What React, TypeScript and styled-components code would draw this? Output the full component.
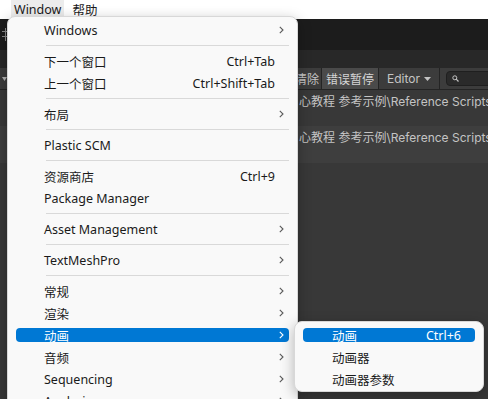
import React from 'react';
import styled, { createGlobalStyle } from 'styled-components';

const Global = createGlobalStyle`
  html, body { margin: 0; padding: 0; background: #383838; }
  body { width: 488px; height: 399px; overflow: hidden; }
  #root { width: 488px; height: 399px; }
`;

const Screen = styled.div`
  position: relative;
  width: 488px;
  height: 399px;
  overflow: hidden;
  display: flex;
  flex-direction: column;
  background: #383838;
`;

/* ---------- top menu bar ---------- */
const MenuBar = styled.div`
  flex: 0 0 16px;
  background: #ffffff;
  display: flex;
  align-items: stretch;
  padding-left: 11px;
  gap: 5px;
  font-family: "Noto Sans", "Noto Sans CJK SC", sans-serif;
  font-size: 12.5px;
  color: #1a1a1a;
`;

const MenuBarItem = styled.div<{ $open?: boolean }>`
  display: flex;
  align-items: center;
  padding: 0 3px;
  background: ${(p) => (p.$open ? '#ececec' : 'transparent')};
`;

/* ---------- dark editor behind ---------- */
const Editor = styled.div`
  flex: 1;
  display: flex;
  flex-direction: column;
  font-family: Inter, "Noto Sans CJK SC", sans-serif;
  font-size: 12px;
  color: #c4c4c4;
`;

const TabStrip = styled.div`
  flex: 0 0 31px;
  background: #1c1c1c;
  display: flex;
  align-items: center;
  padding-left: 2px;
`;

const TabHeader = styled.div`
  flex: 0 0 18px;
  background: #282828;
`;

const Toolbar = styled.div`
  flex: 0 0 21px;
  background: #3c3c3c;
  border-bottom: 1px solid #242424;
  display: flex;
  align-items: stretch;
`;

const DropArrow = styled.div`
  width: 10px;
  display: flex;
  align-items: center;
  padding-left: 2px;
`;

const Spacer = styled.div`
  flex: 1;
`;

const ToolButton = styled.div<{ $w: number; $on?: boolean; $end?: boolean }>`
  flex: 0 0 ${(p) => p.$w}px;
  box-sizing: border-box;
  display: flex;
  align-items: center;
  justify-content: ${(p) => (p.$end ? 'flex-end' : 'center')};
  padding-right: ${(p) => (p.$end ? '2px' : '0')};
  gap: 4px;
  border-right: 1px solid #242424;
  background: ${(p) => (p.$on ? '#4a4a4a' : 'transparent')};
  color: ${(p) => (p.$on ? '#d4d4d4' : '#c4c4c4')};
  white-space: nowrap;
`;

const Search = styled.div`
  flex: 0 0 52px;
  margin: 3px -10px 3px 6px;
  box-sizing: border-box;
  border-radius: 4px;
  background: #2a2a2a;
  border: 1px solid #1f1f1f;
  display: flex;
  align-items: center;
  padding-left: 5px;
`;

const LogRow = styled.div<{ $alt?: boolean; $h: number }>`
  flex: 0 0 ${(p) => p.$h}px;
  box-sizing: border-box;
  background: ${(p) => (p.$alt ? '#3e3e3e' : '#383838')};
  padding: 5px 0 0 299px;
  line-height: 14px;
  white-space: nowrap;
  overflow: hidden;
`;

const Filler = styled.div`
  flex: 1;
  background: #383838;
`;

/* ---------- drop-down menus ---------- */
const Menu = styled.div<{ $left: number; $top: number; $width: number }>`
  position: absolute;
  left: ${(p) => p.$left}px;
  top: ${(p) => p.$top}px;
  width: ${(p) => p.$width}px;
  box-sizing: border-box;
  padding: 2px 0 1px;
  background: #f9f9f9;
  border: 1px solid #d8d8d8;
  border-radius: 8px;
  box-shadow: 0 4px 14px rgba(0, 0, 0, 0.28);
  font-family: "Noto Sans", "Noto Sans CJK SC", sans-serif;
  font-size: 12.5px;
  color: #1a1a1a;
`;

const Item = styled.div<{ $active?: boolean; $indent: number }>`
  position: relative;
  height: 22px;
  margin: 0 8px;
  padding-left: ${(p) => p.$indent}px;
  display: grid;
  grid-template-columns: 1fr auto 14px;
  align-items: center;
  white-space: nowrap;
  color: ${(p) => (p.$active ? '#ffffff' : 'inherit')};
  &::before {
    content: '';
    position: absolute;
    left: 0;
    right: 0;
    top: 4px;
    bottom: 4px;
    border-radius: 4px;
    background: ${(p) => (p.$active ? '#0078d4' : 'transparent')};
  }
  & > * {
    position: relative;
  }
`;

const Shortcut = styled.span`
  text-align: right;
`;

const Arrow = styled.span`
  display: flex;
  align-items: center;
  padding-left: 4px;
`;

const Separator = styled.div`
  height: 9px;
  margin: 0 8px 0 38px;
  display: flex;
  align-items: center;
  &::after {
    content: '';
    flex: 1;
    height: 1px;
    background: #d9d9d9;
  }
`;

type Entry =
  | { sep: true }
  | { label: string; shortcut?: string; sub?: boolean; active?: boolean };

const windowMenu: Entry[] = [
  { label: 'Windows', sub: true },
  { sep: true },
  { label: '下一个窗口', shortcut: 'Ctrl+Tab' },
  { label: '上一个窗口', shortcut: 'Ctrl+Shift+Tab' },
  { sep: true },
  { label: '布局', sub: true },
  { sep: true },
  { label: 'Plastic SCM' },
  { sep: true },
  { label: '资源商店', shortcut: 'Ctrl+9' },
  { label: 'Package Manager' },
  { sep: true },
  { label: 'Asset Management', sub: true },
  { sep: true },
  { label: 'TextMeshPro', sub: true },
  { sep: true },
  { label: '常规', sub: true },
  { label: '渲染', sub: true },
  { label: '动画', sub: true, active: true },
  { label: '音频', sub: true },
  { label: 'Sequencing', sub: true },
  { label: 'Analysis', sub: true },
];

const animMenu: Entry[] = [
  { label: '动画', shortcut: 'Ctrl+6', active: true },
  { label: '动画器' },
  { label: '动画器参数' },
];

const Chevron = ({ color }: { color: string }) => (
  <svg width="5" height="8" viewBox="0 0 5 8">
    <polyline points="0.8,0.8 4,4 0.8,7.2" fill="none" stroke={color} strokeWidth="1.1" />
  </svg>
);

const MenuList = ({ entries, indent }: { entries: Entry[]; indent: number }) => (
  <>
    {entries.map((e, i) =>
      'sep' in e ? (
        <Separator key={i} />
      ) : (
        <Item key={i} $active={e.active} $indent={indent}>
          <span>{e.label}</span>
          <Shortcut>{e.shortcut ?? ''}</Shortcut>
          <Arrow>{e.sub ? <Chevron color={e.active ? '#ffffff' : '#5a5a5a'} /> : null}</Arrow>
        </Item>
      )
    )}
  </>
);

export default function App() {
  return (
    <Screen>
      <Global />
      <MenuBar>
        <MenuBarItem $open>Window</MenuBarItem>
        <MenuBarItem>帮助</MenuBarItem>
      </MenuBar>
      <Editor>
        <TabStrip>
          <svg width="6" height="13" viewBox="0 0 6 13">
            <g stroke="#8a8a8a" strokeWidth="1" fill="none">
              <line x1="3.5" y1="0" x2="3.5" y2="13" />
              <line x1="0" y1="3.5" x2="6" y2="3.5" />
              <line x1="0" y1="8.5" x2="6" y2="8.5" />
            </g>
          </svg>
        </TabStrip>
        <TabHeader />
        <Toolbar>
          <DropArrow>
            <svg width="5" height="4" viewBox="0 0 5 4">
              <polygon points="0,0 5,0 2.5,4" fill="#b4b4b4" />
            </svg>
          </DropArrow>
          <Spacer />
          <ToolButton $w={40} $end>清除</ToolButton>
          <ToolButton $w={57} $on>错误暂停</ToolButton>
          <ToolButton $w={61}>
            Editor
            <svg width="7" height="4" viewBox="0 0 7 4">
              <polygon points="0,0 7,0 3.5,4" fill="#c4c4c4" />
            </svg>
          </ToolButton>
          <Search>
            <svg width="7" height="7" viewBox="0 0 7 7">
              <circle cx="2.8" cy="2.8" r="2" fill="none" stroke="#c4c4c4" strokeWidth="1" />
              <line x1="4.2" y1="4.2" x2="6.5" y2="6.5" stroke="#c4c4c4" strokeWidth="1.2" />
            </svg>
          </Search>
        </Toolbar>
        <LogRow $h={36}>心教程 参考示例\Reference Scripts\ScriptReference.cs</LogRow>
        <LogRow $h={37} $alt>心教程 参考示例\Reference Scripts\ScriptReference.cs</LogRow>
        <Filler />
      </Editor>

      <Menu $left={7} $top={16} $width={291}>
        <MenuList entries={windowMenu} indent={28} />
      </Menu>
      <Menu $left={294} $top={321} $width={190}>
        <MenuList entries={animMenu} indent={29} />
      </Menu>
    </Screen>
  );
}
